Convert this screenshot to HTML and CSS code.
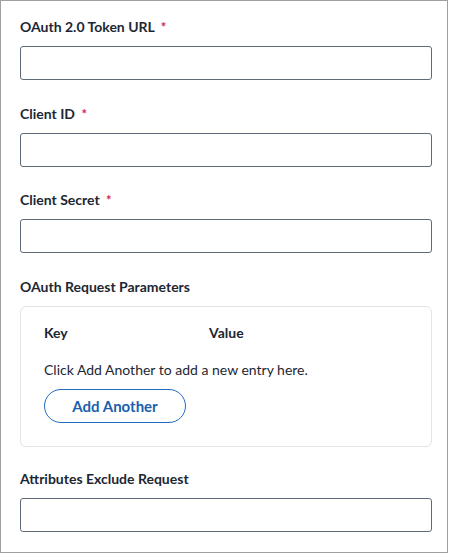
FILE: index.html
```html
<!DOCTYPE html>
<html lang="en">
<head>
    <meta charset="UTF-8">
    <meta name="viewport" content="width=device-width, initial-scale=1.0">
    <title>OAuth Settings</title>
    <link rel="stylesheet" href="styles.css">
</head>
<body>

<div class="panel">
    <div class="field">
        <label for="tokenUrl">OAuth 2.0 Token URL <span class="req">*</span></label>
        <input type="text" id="tokenUrl" name="tokenUrl">
    </div>

    <div class="field">
        <label for="clientId">Client ID <span class="req">*</span></label>
        <input type="text" id="clientId" name="clientId">
    </div>

    <div class="field">
        <label for="clientSecret">Client Secret <span class="req">*</span></label>
        <input type="text" id="clientSecret" name="clientSecret">
    </div>

    <div class="field">
        <span class="label">OAuth Request Parameters</span>
        <div class="params">
            <div class="params-head">
                <span class="col-key">Key</span>
                <span>Value</span>
            </div>
            <p class="empty">Click Add Another to add a new entry here.</p>
            <button type="button" class="btn-add">Add Another</button>
        </div>
    </div>

    <div class="field">
        <label for="excludeRequest">Attributes Exclude Request</label>
        <input type="text" id="excludeRequest" name="excludeRequest">
    </div>
</div>

</body>
</html>
```

FILE: styles.css
```css
body {
    font-family: Lato, "Open Sans", sans-serif;
    font-size: 14px;
    color: #1d2733;
    margin: 0;
    background: #fff;
}
.panel {
    width: 448px;
    height: 553px;
    border: 1px solid #a0a0a0;
    padding: 17px 15px 0 19px;
    box-sizing: border-box;
}
.field {
    margin-bottom: 24.5px;
}
.field label, .field .label {
    display: block;
    height: 18px;
    font-weight: 700;
    line-height: 18px;
    margin-bottom: 10px;
}
.req {
    color: #d0244f;
    font-size: 13px;
    line-height: 1;
    margin-left: 3px;
}
.field input {
    display: block;
    width: 100%;
    height: 34px;
    box-sizing: border-box;
    border: 1px solid #5d6b79;
    border-radius: 3px;
    padding: 6px 10px;
    font: inherit;
}
.params {
    border: 1px solid #e1e3e5;
    border-radius: 6px;
    padding: 17px 23px 23px;
    margin-bottom: -1px;
}
.params-head {
    display: flex;
    font-weight: 700;
    line-height: 18px;
}
.col-key {
    width: 165px;
}
.empty {
    margin: 19px 0 10px;
    line-height: 18px;
}
.btn-add {
    display: block;
    height: 34px;
    width: 142px;
    border: 1px solid #1f6bc4;
    border-radius: 17px;
    background: #fff;
    color: #1b5fae;
    font: inherit;
    font-weight: 700;
    font-size: 15px;
    cursor: pointer;
}
```
